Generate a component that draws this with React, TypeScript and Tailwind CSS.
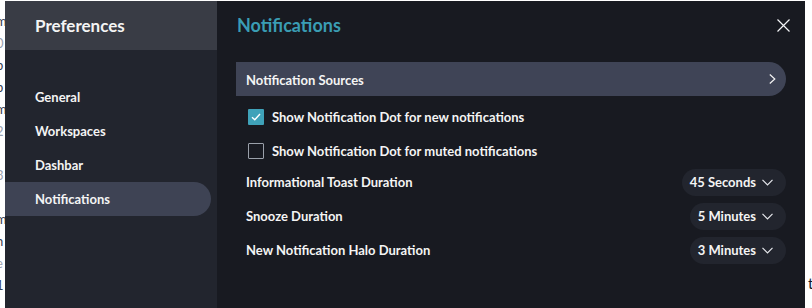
import { useState } from "react";

const navItems = ["General", "Workspaces", "Dashbar", "Notifications"];

const durations = [
  { label: "Informational Toast Duration", value: "45 Seconds" },
  { label: "Snooze Duration", value: "5 Minutes" },
  { label: "New Notification Halo Duration", value: "3 Minutes" },
];

const ChevronDown = () => (
  <svg width="11" height="7" viewBox="0 0 11 7" fill="none" className="text-gray-200">
    <polyline points="0.5,0.8 5.5,5.8 10.5,0.8" stroke="currentColor" strokeWidth="1.2" />
  </svg>
);

const Check = () => (
  <svg width="10" height="8" viewBox="0 0 10 8" fill="none">
    <polyline points="1,4.2 3.8,6.8 9,1" stroke="white" strokeWidth="1.4" />
  </svg>
);

const App = () => {
  const [active, setActive] = useState("Notifications");
  const [dotNew, setDotNew] = useState(true);
  const [dotMuted, setDotMuted] = useState(false);

  return (
    <div
      className="flex h-[308px] w-[812px] overflow-hidden bg-white"
      style={{ fontFamily: "Lato, 'Open Sans', sans-serif" }}
    >
      {/* page behind the dialog */}
      <div className="w-[5px] shrink-0 overflow-hidden pt-[10px] text-[13px] leading-[22px] text-gray-700">
        <div className="-ml-[4px]">m</div>
        <div className="-ml-[4px] text-gray-400">0</div>
        <div className="-ml-[4px]">b</div>
        <div className="-ml-[4px]">b</div>
        <div className="-ml-[4px]">m</div>
        <div className="-ml-[4px] text-gray-400">2</div>
        <div className="-ml-[4px]">.</div>
        <div className="-ml-[4px] text-gray-400">3</div>
        <div className="-ml-[4px]">.</div>
        <div className="-ml-[4px]">m</div>
        <div className="-ml-[4px]">n</div>
        <div className="-ml-[4px] text-gray-400">e</div>
        <div className="-ml-[4px]">1</div>
      </div>

      {/* dialog */}
      <div className="mt-px flex w-[800px] shrink-0 text-[#f4f4f4]">
        {/* sidebar */}
        <aside className="flex w-[212px] shrink-0 flex-col bg-[#22252e]">
          <div className="flex h-[49px] items-center bg-[#393c45] pl-[30px] text-[17px] font-bold">
            Preferences
          </div>
          <nav className="flex flex-col pt-[30px]">
            {navItems.map((item) => (
              <button
                key={item}
                onClick={() => setActive(item)}
                className={`mr-[6px] flex h-[34px] items-center rounded-r-full pl-[30px] pt-[2px] text-left text-[13px] font-bold ${
                  active === item ? "bg-[#3e4354]" : ""
                }`}
              >
                {item}
              </button>
            ))}
          </nav>
        </aside>

        {/* content */}
        <main className="flex flex-1 flex-col bg-[#181a21] px-[19px]">
          <div className="flex h-[49px] items-center justify-between">
            <h1 className="pl-px text-[18px] font-bold text-[#3a9db4]">Notifications</h1>
            <button className="mr-[-4px] text-gray-100">
              <svg width="13" height="13" viewBox="0 0 13 13" fill="none">
                <path d="M0.5 0.5L12.5 12.5M12.5 0.5L0.5 12.5" stroke="currentColor" strokeWidth="1.2" />
              </svg>
            </button>
          </div>

          <button className="mt-[12px] flex h-[34px] items-center justify-between rounded-r-full bg-[#3f4456] pl-[10px] pr-[10px] text-[13px] font-bold">
            <span className="pt-[3px]">Notification Sources</span>
            <svg width="7" height="10" viewBox="0 0 7 10" fill="none">
              <polyline points="0.8,0.5 5.8,5 0.8,9.5" stroke="currentColor" strokeWidth="1.2" />
            </svg>
          </button>

          <div className="mt-[4px] flex flex-col">
            <label className="flex h-[34px] cursor-pointer items-center gap-[8px] pl-[12px] text-[13px] font-bold">
              <span
                onClick={() => setDotNew(!dotNew)}
                className={`flex h-[16px] w-[16px] items-center justify-center rounded-[1px] ${
                  dotNew ? "bg-[#3fa2b9]" : "border border-[#9aa0aa]"
                }`}
              >
                {dotNew && <Check />}
              </span>
              <span className="pt-[2px]">Show Notification Dot for new notifications</span>
            </label>
            <label className="flex h-[34px] cursor-pointer items-center gap-[8px] pl-[12px] text-[13px] font-bold">
              <span
                onClick={() => setDotMuted(!dotMuted)}
                className={`flex h-[16px] w-[16px] items-center justify-center rounded-[1px] ${
                  dotMuted ? "bg-[#3fa2b9]" : "border border-[#9aa0aa]"
                }`}
              >
                {dotMuted && <Check />}
              </span>
              <span className="pt-[2px]">Show Notification Dot for muted notifications</span>
            </label>
          </div>

          <div className="-mt-[3px] flex flex-col">
            {durations.map((row) => (
              <div key={row.label} className="flex h-[34px] items-center justify-between pl-[10px]">
                <span className="pt-px text-[13px] font-bold">{row.label}</span>
                <button className="flex h-[27px] items-center gap-[6px] rounded-full bg-[#22252e] pl-[8px] pr-[13px] text-[13px] font-bold">
                  <span className="pt-px">{row.value}</span>
                  <ChevronDown />
                </button>
              </div>
            ))}
          </div>
        </main>
      </div>

      {/* page behind, right side */}
      <div className="flex flex-1 flex-col justify-end pb-[14px] pl-[3px] text-[15px] text-gray-900">
        t
      </div>
    </div>
  );
};

export default App;
